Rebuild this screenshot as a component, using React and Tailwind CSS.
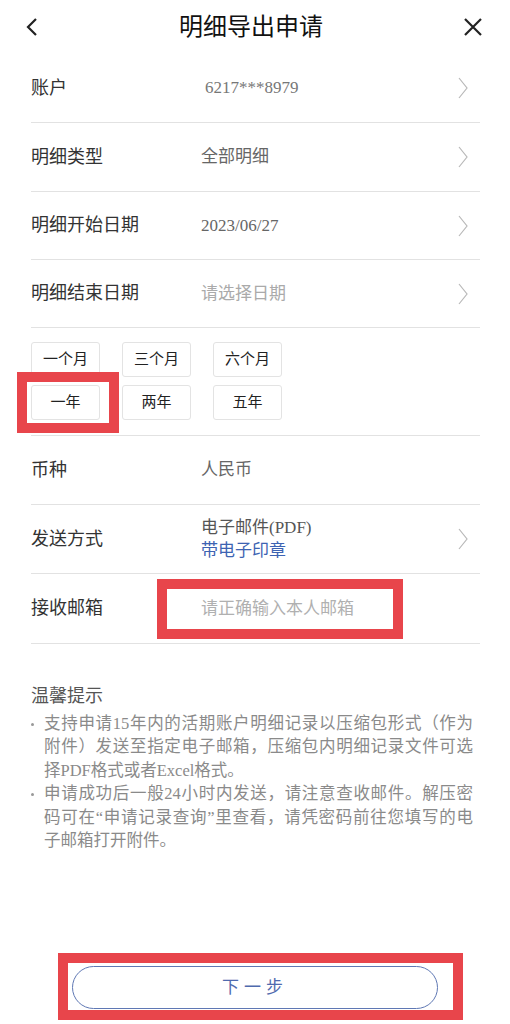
import React from "react";

const font = { fontFamily: '"Liberation Serif", "Noto Sans CJK SC", serif' };

function Chevron() {
  return (
    <svg width="10" height="22" viewBox="0 0 10 22" className="shrink-0">
      <polyline points="1,1 9,11 1,21" fill="none" stroke="#b8b8b8" strokeWidth="1.2" />
    </svg>
  );
}

function Row({ label, h, arrow, children }) {
  return (
    <div className={`flex items-center border-b border-[#e2e2e2] ${h}`}>
      <div className="w-[170px] text-[18px] text-[#333]">{label}</div>
      <div className="flex-1">{children}</div>
      {arrow && (
        <div className="pr-[12px]">
          <Chevron />
        </div>
      )}
    </div>
  );
}

const ranges = [
  ["一个月", "三个月", "六个月"],
  ["一年", "两年", "五年"],
];

const tips = [
  [
    "支持申请15年内的活期账户明细记录以压缩包形式（作为",
    "附件）发送至指定电子邮箱，压缩包内明细记录文件可选",
    "择PDF格式或者Excel格式。",
  ],
  [
    "申请成功后一般24小时内发送，请注意查收邮件。解压密",
    "码可在\u201C申请记录查询\u201D里查看，请凭密码前往您填写的电",
    "子邮箱打开附件。",
  ],
];

export default function App() {
  return (
    <div className="h-screen w-[510px] bg-white flex flex-col" style={font}>
      {/* header */}
      <div className="h-[54px] flex items-center justify-between px-[26px]">
        <svg width="12" height="18" viewBox="0 0 12 18">
          <polyline points="10,1 2,9 10,17" fill="none" stroke="#222" strokeWidth="2.2" />
        </svg>
        <div className="text-[24px] text-[#111]">明细导出申请</div>
        <svg width="18" height="18" viewBox="0 0 18 18" className="mr-[2px]">
          <path d="M1 1 L17 17 M17 1 L1 17" stroke="#222" strokeWidth="2.2" />
        </svg>
      </div>

      <div className="px-[30px] pl-[31px]">
        <Row label="账户" h="h-[69px]" arrow>
          <span className="text-[17px] text-[#777] pl-[4px]">6217***8979</span>
        </Row>
        <Row label="明细类型" h="h-[69px]" arrow>
          <span className="text-[17px] text-[#666]">全部明细</span>
        </Row>
        <Row label="明细开始日期" h="h-[68px]" arrow>
          <span className="text-[17px] text-[#666]">2023/06/27</span>
        </Row>
        <Row label="明细结束日期" h="h-[68px]" arrow>
          <span className="text-[17px] text-[#aaa]">请选择日期</span>
        </Row>

        {/* quick ranges */}
        <div className="border-b border-[#e2e2e2] pt-[14px] pb-[15px] flex flex-col gap-[8px]">
          {ranges.map((row, i) => (
            <div key={i} className="flex gap-[22px]">
              {row.map((r) => (
                <div key={r} className="relative">
                  <div className="w-[69px] h-[35px] border border-[#e3e3e3] rounded-[3px] flex items-center justify-center text-[15px] text-[#222]">
                    {r}
                  </div>
                  {r === "一年" && (
                    <div className="absolute -left-[14px] -right-[19px] -top-[13px] -bottom-[13px] border-[10px] border-[#e8454b]" />
                  )}
                </div>
              ))}
            </div>
          ))}
        </div>

        <Row label="币种" h="h-[69px]">
          <span className="text-[17px] text-[#666]">人民币</span>
        </Row>
        <Row label="发送方式" h="h-[69px]" arrow>
          <div className="flex flex-col leading-[23px] text-[17px]">
            <span className="text-[#555]">电子邮件(PDF)</span>
            <span className="text-[#3d63b2]">带电子印章</span>
          </div>
        </Row>
        <Row label="接收邮箱" h="h-[70px]">
          <div className="relative">
            <span className="text-[17px] text-[#b0b0b0]">请正确输入本人邮箱</span>
            <div className="absolute -left-[44px] top-1/2 -translate-y-1/2 w-[246px] h-[60px] border-[10px] border-[#e8454b]" />
          </div>
        </Row>

        {/* tips */}
        <div className="pt-[40px]">
          <div className="text-[18px] leading-[24px] text-[#555]">温馨提示</div>
          <div className="mt-[4px] text-[16.5px] leading-[23.4px] text-[#8a8a8a]">
            {tips.map((lines, i) => (
              <div key={i} className="flex">
                <div className="w-[13px] shrink-0 pt-[11px]">
                  <div className="w-[3px] h-[3px] rounded-full bg-[#999]" />
                </div>
                <div className="w-[429px]">
                  {lines.map((l, j) => (
                    <div
                      key={j}
                      className={j < lines.length - 1 ? "text-justify [text-align-last:justify] whitespace-nowrap" : ""}
                    >
                      {l}
                    </div>
                  ))}
                </div>
              </div>
            ))}
          </div>
        </div>
      </div>

      {/* next button */}
      <div className="mt-auto mb-[15px] flex justify-center">
        <div className="relative">
          <button className="w-[366px] h-[43px] rounded-full border border-[#5f78b4] text-[17px] tracking-[5px] text-[#4f6aae] bg-white">
            下一步
          </button>
          <div className="absolute -left-[14px] -right-[25px] -top-[13px] -bottom-[11px] border-[10px] border-[#e8454b]" />
        </div>
      </div>
    </div>
  );
}
